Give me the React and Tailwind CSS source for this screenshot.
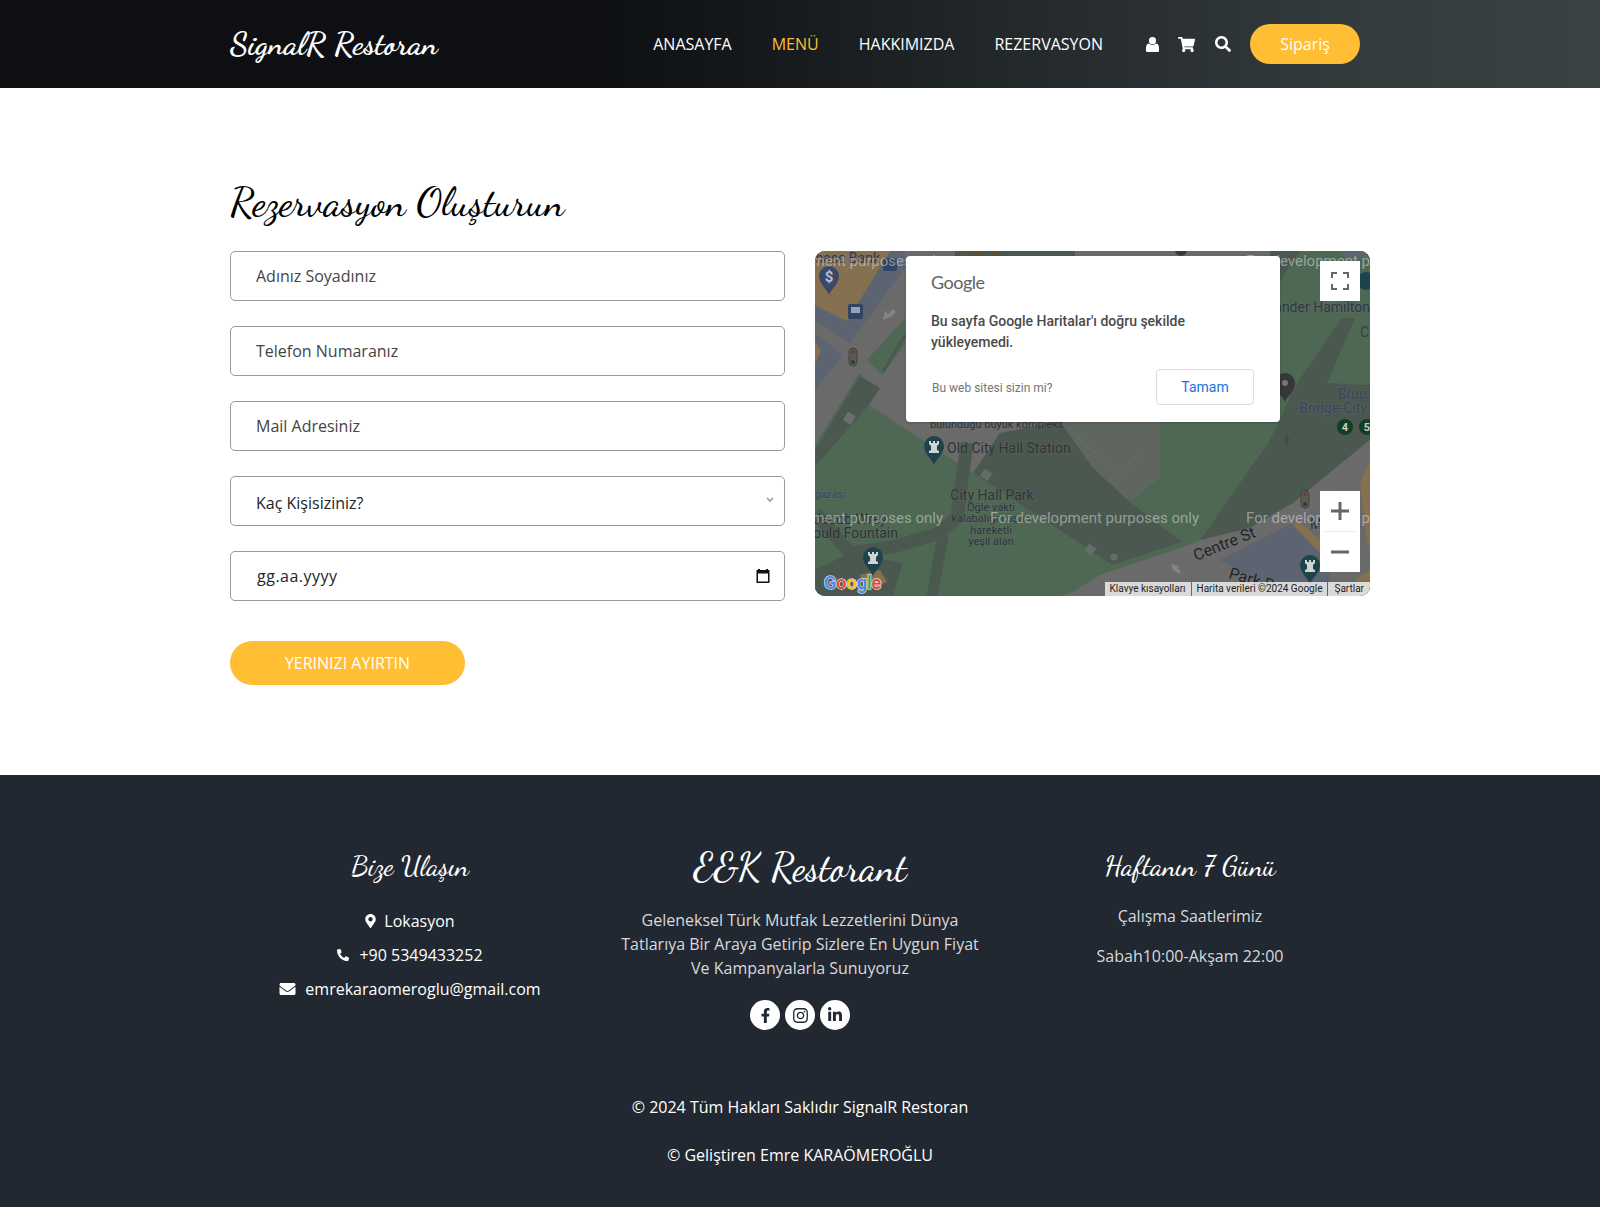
import React from "react";
import { FaShoppingCart, FaSearch, FaMapMarkerAlt, FaPhone, FaEnvelope, FaFacebookF, FaInstagram, FaLinkedinIn } from "react-icons/fa";

const script = "font-['Dancing_Script',cursive]";

function Pin({ x, y, color = "#1e444b", glyph = "castle" }) {
  return (
    <g transform={`translate(${x} ${y})`}>
      <path d="M0 14 C-2 8 -10 3 -10 -5 A10 10 0 1 1 10 -5 C10 3 2 8 0 14 Z" fill={color} />
      {glyph === "castle" && <path d="M-5 2 L5 2 L5 0 L3 -1 L3 -5 L5 -7 L5 -10 L3 -10 L3 -8 L1 -8 L1 -10 L-1 -10 L-1 -8 L-3 -8 L-3 -10 L-5 -10 L-5 -7 L-3 -5 L-3 -1 L-5 0 Z" fill="#cfd3d3" />}
      {glyph === "dollar" && <text x="0" y="1" textAnchor="middle" fontSize="15" fontWeight="700" fontFamily="Roboto, sans-serif" fill="#b9bfcc">$</text>}
      {glyph === "dot" && <circle cx="0" cy="-5" r="3" fill="#777" />}
    </g>
  );
}

function Traffic({ x, y }) {
  return (
    <g transform={`translate(${x} ${y})`}>
      <rect x="-4" y="-9" width="8" height="18" rx="4" fill="#5a5a5a" stroke="#333" strokeWidth="0.7" />
      <circle cx="0" cy="-5" r="2" fill="#6e3d39" />
      <circle cx="0" cy="0" r="2" fill="#6a5733" />
      <circle cx="0" cy="5" r="2" fill="#2f3a33" />
    </g>
  );
}

function Label({ x, y, size = 14, anchor = "start", fill = "#2b3436", children, transform }) {
  return (
    <text x={x} y={y} fontSize={size} textAnchor={anchor} fill={fill} fontFamily="Roboto, sans-serif" transform={transform} stroke="#777777" strokeOpacity="0.3" strokeWidth="1.5" paintOrder="stroke">
      {children}
    </text>
  );
}

function DevMark({ x, y }) {
  return (
    <text x={x} y={y} fontSize="15" fill="#ffffff" fillOpacity="0.42" fontFamily="Roboto, sans-serif">
      For development purposes only
    </text>
  );
}

function MapDrawing() {
  const green = "#4e6854";
  const dark = "#4b584f";
  const blue = "#5b6470";
  const tan = "#857050";
  return (
    <svg viewBox="815 251 555 345" className="block h-full w-full" aria-hidden="true">
      <rect x="815" y="251" width="555" height="345" fill="#6a6a6a" />
      <polygon points="815,320 850,343 905,268 905,251 890,251 847,321 815,305" fill={blue} />
      <polygon points="815,251 890,251 847,321 815,305" fill={tan} />
      <polygon points="815,333 842,355 815,391" fill={blue} />
      <polygon points="815,341 821,351 815,363" fill={tan} />
      <polygon points="867,360 882,375 905,345 905,318" fill={green} />
      <polyline points="905,335 883,372" fill="none" stroke={dark} strokeWidth="3" />
      <polygon points="955,251 1075,251 1075,258 955,258" fill={dark} />
      <circle cx="977" cy="250" r="6" fill="#5d5034" />
      <circle cx="997" cy="250" r="6" fill="#5d5034" />
      <circle cx="1181" cy="250" r="6" fill="#3a3a3a" />
      <polygon points="815,467 869,405 1112,565 1182,542 1200,541 1140,575 1073,592 1060,596 815,596" fill={green} />
      <polygon points="815,445 859,374 863,376 815,452" fill={green} />
      <polygon points="815,467 869,405 880,388 860,376 815,450" fill={dark} />
      <polygon points="973,473 1000,433 1060,421 1093,468 1110,475 1182,542 1112,565" fill={dark} />
      <polygon points="1060,421 1160,421 1160,477 1130,502 1093,468" fill="#5f665f" />
      <polyline points="1075,435 1120,475 1140,452" fill="none" stroke="#6a716b" strokeWidth="1" />
      <polygon points="1160,477 1160,421 1270,421 1270,440 1200,540 1182,542 1130,502" fill={green} />
      <rect x="1270" y="251" width="100" height="150" fill={green} />
      <polygon points="1270,400 1303,395 1270,448" fill={green} />
      <polygon points="1270,251 1300,251 1280,281 1270,281" fill={dark} />
      <polygon points="1340,251 1366,251 1370,258 1345,258" fill={blue} />
      <polygon points="1355,318 1342,318 1297,383 1270,440 1200,540 1250,528 1293,503 1370,440 1370,385 1327,383" fill={dark} />
      <polygon points="1270,385 1370,385 1370,395 1270,397" fill={dark} />
      <polygon points="1293,503 1370,440 1370,460 1360,470 1293,523 1220,560 1140,580 1073,592 1100,575 1200,541 1250,528" fill="#6b6b6b" />
      <polygon points="1220,560 1293,523 1330,550 1330,596 1280,596" fill={blue} />
      <polygon points="1370,460 1360,483 1367,540 1370,550" fill={tan} />
      <polygon points="1293,525 1320,553 1320,540 1297,520" fill={tan} />
      <polygon points="1355,580 1370,570 1370,596 1345,596" fill={tan} />
      <polygon points="850,553 903,563 893,596 815,596 815,570" fill={dark} />
      <polygon points="860,575 880,570 887,582 865,590" fill={tan} />
      <polyline points="967,443 957,517 940,533 893,547 850,553 815,513" fill="none" stroke={dark} strokeWidth="13" />
      <polyline points="943,535 932,597" fill="none" stroke={dark} strokeWidth="11" />
      <rect x="982" y="470" width="9" height="9" fill="#636c66" transform="rotate(35 986 474)" />
      <rect x="1086" y="545" width="9" height="9" fill="#636c66" transform="rotate(35 1090 549)" />
      <circle cx="1114" cy="557" r="3.5" fill="#636c66" />
      <rect x="845" y="413" width="9" height="10" fill="#6c6f6c" transform="rotate(30 849 418)" />
      <circle cx="1366" cy="281" r="9" fill="#1e444b" />
      <path d="M890 317 l-7 3 l2 -10 l3 4 l5 -5 l3 3 l-5 5z" fill="#848484" />
      <path d="M1284 441 l3 -7 l3 7 l-2 0 l0 5 l-2 0 l0 -5z" fill="#3c5140" />
      <path d="M1173 571 l-2 -7 l8 2 l-2 2 l4 3 l-2 3 l-4 -3z" fill="#848484" />

      <Pin x={829} y={281} color="#39486a" glyph="dollar" />
      <Pin x={934} y={451} />
      <Pin x={873} y={562} />
      <Pin x={1310} y={570} />
      <Pin x={1285} y={388} color="#363838" glyph="dot" />
      <rect x="848" y="304" width="15" height="15" rx="2" fill="#2f4564" />
      <rect x="851" y="307" width="9" height="6" fill="#9aa2b2" />
      <rect x="883" y="258" width="14" height="13" rx="2" fill="#2f4564" />
      <Traffic x={853} y={357} />
      <Traffic x={1305} y={499} />
      <circle cx="1345" cy="427" r="8" fill="#123d26" />
      <circle cx="1367" cy="427" r="8" fill="#123d26" />
      <text x="1345" y="431" textAnchor="middle" fontSize="11" fontWeight="700" fill="#c9cfca" fontFamily="Roboto, sans-serif">4</text>
      <text x="1367" y="431" textAnchor="middle" fontSize="11" fontWeight="700" fill="#c9cfca" fontFamily="Roboto, sans-serif">5</text>

      <Label x={880} y={263} anchor="end" size={14} fill="#2f3748">Chase Bank</Label>
      <Label x={1370} y={312} anchor="end" size={14} fill="#2f3748">Alexander Hamilton</Label>
      <Label x={1360} y={337} size={14} fill="#2f3748">Cl</Label>
      <Label x={1367} y={399} anchor="end" size={14} fill="#36445e">Broo</Label>
      <Label x={1367} y={413} anchor="end" size={14} fill="#36445e">Bridge-City</Label>
      <Label x={930} y={428} size={11}>bulunduğu büyük kompleks</Label>
      <Label x={947} y={453} size={14}>Old City Hall Station</Label>
      <Label x={992} y={500} anchor="middle" size={14}>City Hall Park</Label>
      <Label x={991} y={511} anchor="middle" size={11}>Öğle vakti</Label>
      <Label x={991} y={522} anchor="middle" size={11}>kalabalığı coşan</Label>
      <Label x={991} y={534} anchor="middle" size={11}>hareketli</Label>
      <Label x={991} y={545} anchor="middle" size={11}>yeşil alan</Label>
      <Label x={815} y={498} size={10.5} fill="#36445e">ğazası</Label>
      <Label x={850} y={524} anchor="middle" size={14}>Jacob Wrey</Label>
      <Label x={898} y={538} anchor="end" size={14}>Mould Fountain</Label>
      <Label x={1196} y={561} size={16} fill="#1f2527" transform="rotate(-22 1196 561)">Centre St</Label>
      <Label x={1228} y={578} size={16} fill="#1f2527" transform="rotate(16 1228 578)">Park R</Label>
      <Label x={1310} y={529} size={14}>Ma</Label>

      <DevMark x={734} y={266} />
      <DevMark x={1246} y={266} />
      <DevMark x={734} y={523} />
      <DevMark x={990} y={523} />
      <DevMark x={1246} y={523} />

      <text x="824" y="589" fontSize="18" fontWeight="500" fontFamily="Roboto, sans-serif" stroke="#ffffff" strokeOpacity="0.75" strokeWidth="1.6" paintOrder="stroke">
        <tspan fill="#4285f4">G</tspan><tspan fill="#ea4335">o</tspan><tspan fill="#fbbc05">o</tspan><tspan fill="#4285f4">g</tspan><tspan fill="#34a853">l</tspan><tspan fill="#ea4335">e</tspan>
      </text>
    </svg>
  );
}

function MapPanel() {
  return (
    <div className="relative h-[345px] overflow-hidden rounded-[10px] bg-[#696969]">
      <MapDrawing />
      <div className="absolute left-[91px] top-[5px] flex h-[166px] w-[374px] flex-col rounded-[4px] bg-white px-[25px] shadow-[0_1px_3px_rgba(0,0,0,0.2)] font-['Roboto',sans-serif]">
        <div className="mt-[15px] h-[22px] font-['Lato',sans-serif] text-[18px] leading-[22px] tracking-[-0.5px] text-[#5f6368]">Google</div>
        <p className="mt-[18px] w-[290px] text-[14px] font-medium leading-[21px] text-[#4a4a4a]">Bu sayfa Google Haritalar'ı doğru şekilde yükleyemedi.</p>
        <div className="mt-[16px] flex items-center justify-between pl-[1px] pr-[1px]">
          <span className="pt-[1px] text-[12px] text-[#757575]">Bu web sitesi sizin mi?</span>
          <span className="flex h-[36px] w-[98px] items-center justify-center rounded-[4px] border border-[#dadce0] text-[14px] text-[#1a73e8]">Tamam</span>
        </div>
      </div>
      <div className="absolute left-[505px] top-[10px] flex h-[40px] w-[40px] items-center justify-center bg-white">
        <svg width="18" height="18" viewBox="0 0 18 18" fill="#666666" aria-hidden="true">
          <path d="M0 0h6v2H2v4H0zM12 0h6v6h-2V2h-4zM0 12h2v4h4v2H0zM16 12h2v6h-6v-2h4z" />
        </svg>
      </div>
      <div className="absolute left-[505px] top-[240px] flex w-[40px] flex-col items-center bg-white">
        <div className="flex h-[40px] w-full items-center justify-center">
          <svg width="18" height="18" viewBox="0 0 18 18" fill="#666666" aria-hidden="true"><path d="M7.5 0h3v7.5H18v3h-7.5V18h-3v-7.5H0v-3h7.5z" /></svg>
        </div>
        <div className="h-px w-[30px] bg-[#e6e6e6]"></div>
        <div className="flex h-[40px] w-full items-center justify-center">
          <svg width="18" height="18" viewBox="0 0 18 18" fill="#666666" aria-hidden="true"><path d="M0 7.5h18v3H0z" /></svg>
        </div>
      </div>
      <div className="absolute bottom-0 right-0 flex h-[14px] items-stretch font-['Roboto',sans-serif] text-[10px] leading-[14px] text-[#222]">
        <span className="mr-px bg-[rgba(245,245,245,0.8)] px-[5px]">Klavye kısayolları</span>
        <span className="mr-px bg-[rgba(245,245,245,0.8)] px-[5px]">Harita verileri ©2024 Google</span>
        <span className="bg-[rgba(245,245,245,0.8)] px-[6px]">Şartlar</span>
      </div>
    </div>
  );
}

function Field({ placeholder }) {
  return (
    <input
      type="text"
      placeholder={placeholder}
      className="h-[50px] w-full rounded-[5px] border border-[#9a9a9a] bg-white pl-[25px] pr-[25px] text-[16px] outline-none placeholder:text-[#444]"
    />
  );
}

export default function App() {
  return (
    <div className="min-h-[1207px] bg-white font-['Open_Sans',sans-serif] text-[16px] text-[#212529]">
      <header className="h-[88px] bg-[linear-gradient(90deg,#0d0f12_0%,#0e1013_38%,#22272a_62%,#343b3d_85%,#3a4243_100%)]">
        <div className="mx-auto flex h-full w-[1140px] items-center pr-[10px]">
          <a className={`${script} text-[32px] font-bold leading-none text-white`}>SignalR Restoran</a>
          <nav className="ml-auto flex items-center gap-[40px] text-white">
            <a>ANASAYFA</a>
            <a className="text-[#ffbe33]">MENÜ</a>
            <a>HAKKIMIZDA</a>
            <a>REZERVASYON</a>
          </nav>
          <div className="ml-[43px] flex items-center text-white">
            <svg width="13" height="15" viewBox="0 0 13 15" fill="currentColor" aria-hidden="true">
              <circle cx="6.5" cy="3.7" r="3.6" />
              <path d="M0 13.6v-3C0 8 1.6 6.6 3 6.6c1 .9 2.1 1.3 3.5 1.3s2.5-.4 3.5-1.3c1.4 0 3 1.4 3 4v3a1.3 1.3 0 0 1-1.3 1.4H1.3A1.3 1.3 0 0 1 0 13.6z" />
            </svg>
            <FaShoppingCart className="ml-[19px] h-[17px] w-[17px]" />
            <FaSearch className="ml-[20px] h-[16px] w-[16px]" />
          </div>
          <a className="ml-[19px] flex h-[40px] w-[110px] items-center justify-center rounded-full bg-[#ffbe33] text-white">Sipariş</a>
        </div>
      </header>

      <main className="mx-auto h-[687px] w-[1140px] pt-[90px]">
        <h2 className={`${script} mb-[25px] h-[48px] text-[40.6px] font-medium leading-[48px] text-black`}>Rezervasyon Oluşturun</h2>
        <div className="grid grid-cols-2 gap-[30px]">
          <form className="flex flex-col">
            <div className="flex flex-col gap-[25px]">
              <Field placeholder="Adınız Soyadınız" />
              <Field placeholder="Telefon Numaranız" />
              <Field placeholder="Mail Adresiniz" />
              <div className="relative">
                <select defaultValue="" className="h-[50px] w-full appearance-none rounded-[5px] border border-[#9a9a9a] bg-white pl-[25px] pr-[30px] pt-[4px] text-[16px] text-[#212529] outline-none">
                  <option value="">Kaç Kişisiziniz?</option>
                  <option>2</option>
                  <option>3</option>
                  <option>4</option>
                </select>
                <svg className="pointer-events-none absolute right-[11px] top-[21px]" width="8" height="6" viewBox="0 0 8 6" fill="none" aria-hidden="true">
                  <path d="M1 1l3 3 3-3" stroke="#999999" strokeWidth="1.6" />
                </svg>
              </div>
              <div className="relative">
                <input
                  type="text"
                  placeholder="gg.aa.yyyy"
                  className="h-[50px] w-full rounded-[5px] border border-[#9a9a9a] bg-white pl-[26px] pr-[25px] text-[16px] tracking-[0.5px] outline-none placeholder:text-[#212529]"
                />
                <svg className="absolute right-[14px] top-[17px]" width="16" height="16" viewBox="0 0 16 16" aria-hidden="true">
                  <path d="M3 1h2v1h6V1h2v1h1.5v13h-13V2H3zM3 5.5v8h10v-8z" fill="#111" />
                </svg>
              </div>
            </div>
            <button type="button" className="mt-[40px] flex h-[44px] w-[235px] items-center justify-center rounded-full bg-[#ffbe33] text-white">YERINIZI AYIRTIN</button>
          </form>
          <MapPanel />
        </div>
      </main>

      <footer className="h-[432px] bg-[#222831] pt-[74px] text-center text-white">
        <div className="mx-auto grid w-[1140px] grid-cols-3 gap-[30px]">
          <div className="flex flex-col items-center">
            <h4 className={`${script} mb-[26px] h-[34px] text-[28px] font-medium leading-[34px]`}>Bize Ulaşın</h4>
            <div className="flex flex-col items-center gap-[10px] leading-[24px]">
              <a className="flex items-center gap-[8px]"><FaMapMarkerAlt className="h-[14px] w-[11px]" />Lokasyon</a>
              <a className="flex items-center gap-[10px]"><FaPhone className="h-[12px] w-[12px] -scale-x-100" />+90 5349433252</a>
              <a className="flex items-center gap-[9px]"><FaEnvelope className="h-[16px] w-[17px]" />emrekaraomeroglu@gmail.com</a>
            </div>
          </div>
          <div className="flex flex-col items-center">
            <h4 className={`${script} mb-[21px] h-[38px] text-[39px] font-medium leading-[38px]`}>E&amp;K Restorant</h4>
            <p className="w-[360px] leading-[24px] text-[#d8d9da]">Geleneksel Türk Mutfak Lezzetlerini Dünya Tatlarıya Bir Araya Getirip Sizlere En Uygun Fiyat Ve Kampanyalarla Sunuyoruz</p>
            <div className="mt-[20px] flex gap-[5px] text-[#222831]">
              <a className="flex h-[30px] w-[30px] items-center justify-center rounded-full bg-white"><FaFacebookF className="h-[15px] w-[15px]" /></a>
              <a className="flex h-[30px] w-[30px] items-center justify-center rounded-full bg-white"><FaInstagram className="h-[17px] w-[17px]" /></a>
              <a className="flex h-[30px] w-[30px] items-center justify-center rounded-full bg-white"><FaLinkedinIn className="h-[16px] w-[16px]" /></a>
            </div>
          </div>
          <div className="flex flex-col items-center">
            <h4 className={`${script} mb-[21px] h-[34px] text-[28px] font-medium leading-[34px]`}>Haftanın 7 Günü</h4>
            <p className="leading-[24px] text-[#d8d9da]">Çalışma Saatlerimiz</p>
            <p className="mt-[16px] leading-[24px] text-[#d8d9da]">Sabah10:00-Akşam 22:00</p>
          </div>
        </div>
        <div className="mt-[65px] flex flex-col items-center gap-[24px] leading-[24px]">
          <p>© 2024 Tüm Hakları Saklıdır SignalR Restoran</p>
          <p>© Geliştiren Emre KARAÖMEROĞLU</p>
        </div>
      </footer>
    </div>
  );
}
